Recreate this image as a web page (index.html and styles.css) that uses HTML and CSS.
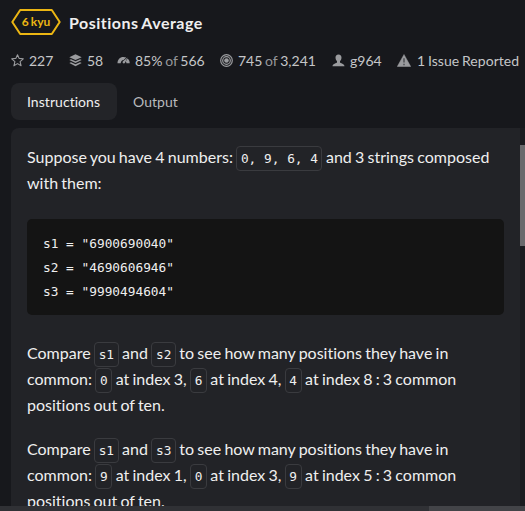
FILE: index.html
```html
<!DOCTYPE html>
<html lang="en">
<head>
<meta charset="utf-8">
<title>Positions Average</title>
<link rel="stylesheet" href="styles.css">
</head>
<body>
<header class="head">
  <div class="rank">
    <svg class="rank-shape" width="50" height="26" viewBox="0 0 50 26"><path d="M9.2 1H40.8L48.7 13L40.8 25H9.2L1.3 13Z" fill="none" stroke="#ecb613" stroke-width="2" stroke-linejoin="round"/></svg>
    <span class="rank-label">6 kyu</span>
  </div>
  <h1 class="title">Positions Average</h1>
</header>
<ul class="stats">
  <li class="stat stars"><svg width="13" height="13" viewBox="0 0 13 13"><path d="M6.5 .7L8.1 4.4L12.3 4.8L9.1 7.6L10.1 11.8L6.5 9.6L2.9 11.8L3.9 7.6L.7 4.8L4.9 4.4Z" fill="none" stroke="#9a9b9e" stroke-width="1.1" stroke-linejoin="round"/></svg><span>227</span></li>
  <li class="stat layers"><svg width="13" height="13" viewBox="0 0 13 13"><g fill="#9a9b9e"><path d="M6.5 .3L12.7 3.2L6.5 6.1L.3 3.2Z"/><path d="M.3 6L2 5.2L6.5 7.2L11 5.2L12.7 6L6.5 9.1Z"/><path d="M.3 9.1L2 8.3L6.5 10.3L11 8.3L12.7 9.1L6.5 12.3Z"/></g></svg><span>58</span></li>
  <li class="stat rate"><svg width="13" height="13" viewBox="0 0 13 13"><path d="M.5 9.3C.5 5.5 3 3 6.3 3C7.5 3 8.5 3.2 9.3 3.6L6.6 6.1C4.8 6.2 3.9 7.4 3.7 9.3ZM10.6 4.5C12 5.6 12.7 7.3 12.7 9.3H9.4C9.4 8.5 9.2 7.9 8.8 7.4ZM10.5 3.5L8 8.8C7.5 10 5.3 9.7 5.6 8.1C5.7 7.7 6 7.4 6.3 7.1Z" fill="#9a9b9e"/></svg><span>85% <i>of</i> 566</span></li>
  <li class="stat done"><svg width="13" height="13" viewBox="0 0 13 13"><g fill="none" stroke="#9a9b9e" stroke-width="1.2"><circle cx="6.5" cy="6.5" r="5.8"/><circle cx="6.5" cy="6.5" r="3.8"/></g><circle cx="6.5" cy="6.5" r="2.3" fill="#9a9b9e"/></svg><span>745 <i>of</i> 3,241</span></li>
  <li class="stat author"><svg width="13" height="13" viewBox="0 0 13 13"><path d="M6.5 .4C8.5 .4 9.6 1.8 9.5 3.8C9.4 5.4 8.9 6.3 8 7.1V8.4C8.3 9.2 12.4 9.4 12.5 12.2H.5C.6 9.4 4.7 9.2 5 8.4V7.1C4.1 6.3 3.6 5.4 3.5 3.8C3.4 1.8 4.5 .4 6.5 .4Z" fill="#9a9b9e"/></svg><span>g964</span></li>
  <li class="stat issue"><svg width="14" height="13" viewBox="0 0 14 13"><path d="M7 .5L13.7 12.5H.3Z" fill="#9a9b9e" stroke="#9a9b9e" stroke-width=".5" stroke-linejoin="round"/><path d="M7 4.2V8.6M7 9.8V11.2" stroke="#34353a" stroke-width="1.1"/></svg><span>1 Issue Reported</span></li>
</ul>
<nav class="tabs"><a class="tab active">Instructions</a><a class="tab">Output</a></nav>
<div class="workspace">
  <main class="panel">
    <p>Suppose you have 4 numbers: <code>0, 9, 6, 4</code> and 3 strings composed<br>with them:</p>
    <pre>s1 = "6900690040"
s2 = "4690606946"
s3 = "9990494604"</pre>
    <p>Compare <code>s1</code> and <code>s2</code> to see how many positions they have in<br>common: <code>0</code> at index 3, <code>6</code> at index 4, <code>4</code> at index 8 : 3 common<br>positions out of ten.</p>
    <p>Compare <code>s1</code> and <code>s3</code> to see how many positions they have in<br>common: <code>9</code> at index 1, <code>0</code> at index 3, <code>9</code> at index 5 : 3 common<br>positions out of ten.</p>
  </main>
  <div class="scrollbar"><div class="thumb"></div></div>
</div>
<footer class="bottom"><div class="bottom-thumb"></div></footer>
</body>
</html>
```
FILE: styles.css
```css
* { box-sizing: border-box; }
body {
  margin: 0;
  width: 525px;
  height: 511px;
  overflow: hidden;
  display: flex;
  flex-direction: column;
  background: #17181c;
  color: #efefef;
  font: 16px/26px Lato, sans-serif;
  font-variant-ligatures: none;
  word-spacing: -0.88px;
}
svg { display: block; flex: none; }
.head { display: flex; height: 48px; padding: 9px 0 0 11px; }
.rank { display: grid; width: 50px; height: 26px; place-items: center; }
.rank > * { grid-area: 1 / 1; }
.rank-label { color: #ecb613; font-size: 12px; font-weight: 700; line-height: 26px; }
.title { margin: 0 0 0 8px; font-size: 16px; font-weight: 700; line-height: 28px; letter-spacing: 0.48px; white-space: nowrap; }
.stats {
  display: flex;
  height: 35px;
  margin: 0;
  padding: 0 0 0 11px;
  list-style: none;
  font-size: 14px;
  line-height: 26px;
  color: #c5c6c8;
}
.stat { display: flex; flex: none; height: 26px; align-items: center; gap: 5px; white-space: nowrap; }
.stat svg { margin-top: -2px; }
.stat i { font-style: normal; color: #96979a; }
.stars { width: 58px; }
.layers { width: 48px; }
.rate { width: 103px; }
.done { width: 112px; }
.author { width: 65px; }
.stat.issue { gap: 6px; letter-spacing: 0.05px; }
.tabs { display: flex; height: 45px; flex: none; font-size: 14px; line-height: 37px; }
.tab { height: 37px; padding: 0 16px; color: #b9babc; letter-spacing: 0.05px; }
.tab.active { margin-left: 11px; width: 106px; border-radius: 8px; background: #232428; color: #efefef; }
.workspace { display: flex; height: 378px; flex: none; }
.panel {
  width: 509px;
  margin-left: 11px;
  padding: 16px 16px 0;
  overflow: hidden;
  border-radius: 8px 0 0 0;
  background: #222327;
}
.panel p { margin: 0 0 18px; white-space: nowrap; }
code {
  margin: 0 0.3px;
  padding: 4px 3.5px;
  border: 1px solid #3a3b3f;
  border-radius: 4px;
  font: 12.8px/16px "DejaVu Sans Mono", monospace;
  word-spacing: 0;
}
.panel pre {
  height: 96px;
  margin: 23px 0 25px;
  padding: 13px 16px 11px;
  border-radius: 5px;
  background: #141414;
  font: 12.8px/24px "DejaVu Sans Mono", monospace;
  word-spacing: 0;
}
.scrollbar { width: 5px; padding-top: 17px; background: #1b1c20; }
.thumb { height: 101px; background: #6a6a6d; }
.bottom { display: flex; justify-content: flex-end; height: 5px; flex: none; background: #303135; }
.bottom-thumb { width: 96px; background: #434448; }
```
